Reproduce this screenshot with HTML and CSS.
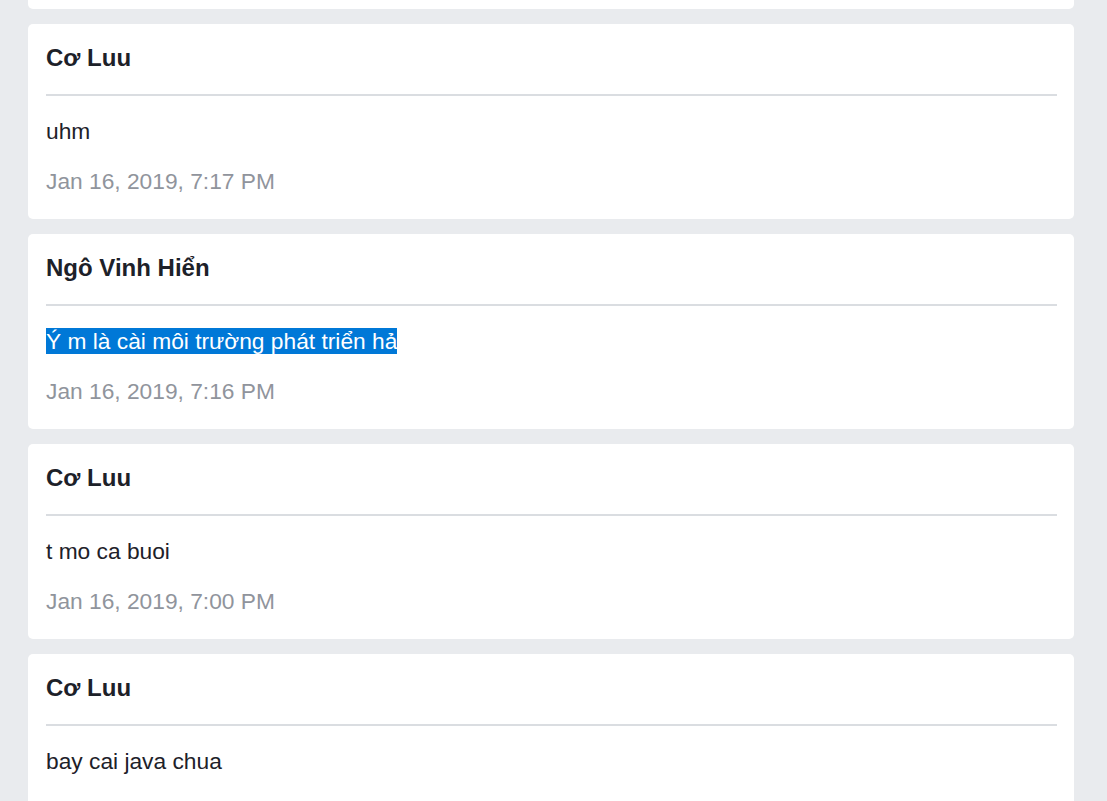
FILE: index.html
```html
<!DOCTYPE html>
<html lang="vi">
<head>
<meta charset="utf-8">
<title>Messages</title>
<link rel="stylesheet" href="styles.css">
</head>
<body>
<div class="feed">
  <div class="card card-clipped"></div>
  <div class="card">
    <div class="name">Cơ Luu</div>
    <div class="text">uhm</div>
    <div class="date">Jan 16, 2019, 7:17 PM</div>
  </div>
  <div class="card">
    <div class="name">Ngô Vinh Hiển</div>
    <div class="text"><span class="selected">Ý m là cài môi trường phát triển hả</span></div>
    <div class="date">Jan 16, 2019, 7:16 PM</div>
  </div>
  <div class="card">
    <div class="name">Cơ Luu</div>
    <div class="text">t mo ca buoi</div>
    <div class="date">Jan 16, 2019, 7:00 PM</div>
  </div>
  <div class="card card-open">
    <div class="name">Cơ Luu</div>
    <div class="text">bay cai java chua</div>
  </div>
</div>
</body>
</html>
```
FILE: styles.css
```css
html, body {
  margin: 0;
  padding: 0;
  background: #e9ebee;
  font-family: "Liberation Sans", Arial, sans-serif;
  color: #1d2129;
  overflow: hidden;
}

.feed {
  display: flex;
  flex-direction: column;
  gap: 15px;
  padding: 0 33px 0 28px;
}

.card {
  background: #ffffff;
  border-radius: 5px;
  padding: 16px 17px 21px 18px;
}

.card-clipped {
  height: 9px;
  padding: 0;
  border-radius: 0 0 5px 5px;
}

.card-open {
  padding-bottom: 71px;
}

.name {
  font-size: 24px;
  font-weight: bold;
  line-height: 36px;
  padding-bottom: 18px;
  border-bottom: 2px solid #dadde1;
}

.text {
  font-size: 22.75px;
  line-height: 34px;
  margin-top: 18px;
}

.selected {
  background: #0078d7;
  color: #ffffff;
}

.date {
  font-size: 22.75px;
  line-height: 34px;
  margin-top: 16px;
  color: #90949c;
}
```
